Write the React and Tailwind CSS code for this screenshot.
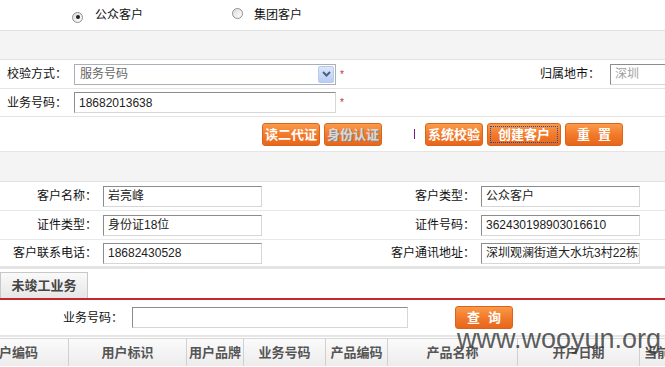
import React from 'react';

const font = { fontFamily: '"Liberation Sans", "Noto Sans CJK SC", sans-serif' };

function Radio({ checked }) {
  return (
    <span className="inline-flex h-[11px] w-[11px] items-center justify-center rounded-full border border-[#8f8f8f] bg-gradient-to-br from-[#dcdcdc] to-white">
      {checked && <span className="h-[4px] w-[4px] rounded-full bg-[#222]" />}
    </span>
  );
}

function Btn({ children, w = 'w-[58px]', disabled, focus, wide }) {
  return (
    <button
      className={`${w} h-[23px] rounded-[3px] border border-[#d9651c] bg-gradient-to-b from-[#fa9a4a] via-[#f27a2a] to-[#e8661b] p-[2px] text-[13px] font-bold leading-none`}
    >
      <span
        className={`flex h-full w-full items-center justify-center ${focus ? 'border border-dotted border-[#1f4fa8]' : ''} ${disabled ? 'text-[#d8d8d8] [text-shadow:1px_1px_0_#8a8a8a]' : 'text-white'} ${wide ? 'tracking-[8px] pl-[8px]' : ''}`}
      >
        {children}
      </span>
    </button>
  );
}

function Field({ value, w = 'w-[159px]', gray }) {
  return (
    <div
      className={`${w} flex h-[21px] items-center overflow-hidden whitespace-nowrap border border-b-[#d6d6d6] border-l-[#8c8c8c] border-r-[#d6d6d6] border-t-[#8c8c8c] bg-white px-[4px] text-[12px] ${gray ? 'text-[#a0a0a0]' : 'text-[#222]'}`}
    >
      {value}
    </div>
  );
}

function CustRow({ l1, v1, l2, v2, last }) {
  return (
    <div className={`flex h-[29px] items-center ${last ? 'border-b-[3px] border-[#e4e4e4]' : 'border-b border-[#e8e8e8]'}`}>
      <div className="w-[97px] text-right text-[12px] text-[#111]">{l1}</div>
      <div className="ml-[6px]"><Field value={v1} /></div>
      <div className="w-[213px] text-right text-[12px] text-[#111]">{l2}</div>
      <div className="ml-[6px]"><Field value={v2} /></div>
    </div>
  );
}

const cols = [
  ['用户编码', 'w-[113px] -ml-[44px]'],
  ['用户标识', 'w-[118px]'],
  ['用户品牌', 'w-[57px]'],
  ['业务号码', 'w-[82px]'],
  ['产品编码', 'w-[62px]'],
  ['产品名称', 'w-[130px]'],
  ['开户日期', 'w-[122px]'],
  ['当前状态', 'w-[80px] justify-start pl-[4px]'],
];

export default function App() {
  return (
    <div className="relative h-[367px] w-[665px] overflow-hidden bg-white text-[12px]" style={font}>
      {/* customer type radios */}
      <div className="flex h-[30px] items-center">
        <span className="ml-[72px]"><Radio checked /></span>
        <span className="ml-[12px] text-[#111]">公众客户</span>
        <span className="ml-[89px]"><Radio /></span>
        <span className="ml-[11px] text-[#111]">集团客户</span>
      </div>
      <div className="h-[30px] border-y border-[#e2e2e2] bg-[#f4f4f4]" />

      {/* verify */}
      <div className="flex h-[29px] items-center border-b border-[#e4e4e4]">
        <div className="ml-[7px] w-[67px] text-[#111]">校验方式：</div>
        <div className="flex h-[21px] w-[262px] items-center border border-[#a9b0b8] bg-white pl-[5px] pr-[1px]">
          <span className="flex-1 text-[12px] text-[#666]">服务号码</span>
          <span className="flex h-[17px] w-[16px] items-center justify-center rounded-[2px] border border-[#b9c9ef] bg-gradient-to-b from-[#dbe6fb] to-[#b9cdf5]">
            <svg width="9" height="6" viewBox="0 0 9 6"><path d="M1 1l3.5 3.5L8 1" stroke="#4d6185" strokeWidth="2" fill="none" /></svg>
          </span>
        </div>
        <span className="ml-[4px] text-[10px] text-[#d0283c]">*</span>
        <div className="ml-auto w-[70px] text-[#111]">归属地市：</div>
        <div className="-mr-[10px]"><Field value="深圳" w="w-[65px]" gray /></div>
      </div>
      <div className="flex h-[28px] items-center border-b border-[#e4e4e4]">
        <div className="ml-[7px] w-[67px] text-[#111]">业务号码：</div>
        <Field value="18682013638" w="w-[262px]" />
        <span className="ml-[4px] text-[10px] text-[#d0283c]">*</span>
      </div>

      {/* action buttons */}
      <div className="flex h-[35px] items-center border-b border-[#e4e4e4]">
        <div className="ml-[262px] flex gap-[4px]">
          <Btn>读二代证</Btn>
          <Btn disabled>身份认证</Btn>
        </div>
        <span className="ml-[32px] h-[10px] w-[1px] bg-[#7a1a8a]" />
        <div className="ml-[10px] flex gap-[4px]">
          <Btn>系统校验</Btn>
          <Btn w="w-[74px]" focus>创建客户</Btn>
          <Btn wide>重置</Btn>
        </div>
      </div>
      <div className="h-[30px] border-b border-[#e2e2e2] bg-[#f4f4f4]" />

      {/* customer info */}
      <CustRow l1="客户名称：" v1="岩亮峰" l2="客户类型：" v2="公众客户" />
      <CustRow l1="证件类型：" v1="身份证18位" l2="证件号码：" v2="362430198903016610" />
      <CustRow l1="客户联系电话：" v1="18682430528" l2="客户通讯地址：" v2="深圳观澜街道大水坑3村22栋3号" last />

      {/* tabs */}
      <div className="flex h-[31px] items-end border-b-2 border-[#c3262c]">
        <div className="flex h-[26px] w-[88px] items-center justify-center border border-b-0 border-[#c8c8c8] bg-gradient-to-b from-[#fafafa] to-[#e6e6e6] text-[13px] font-bold text-[#444]">
          未竣工业务
        </div>
      </div>

      {/* query */}
      <div className="flex h-[37px] items-center border-b-2 border-[#e6e6e6]">
        <div className="ml-[63px] w-[69px] text-[#111]">业务号码：</div>
        <Field value="" w="w-[276px]" />
        <div className="ml-[47px]"><Btn wide>查询</Btn></div>
      </div>

      {/* table header */}
      <div className="mt-[1px] flex h-[28px] border-t border-[#d8d8d8] bg-gradient-to-b from-[#fbfbfb] to-[#ececec]">
        {cols.map(([t, c]) => (
          <div key={t} className={`${c} flex shrink-0 items-center justify-center whitespace-nowrap border-r border-[#d0d0d0] text-[13px] font-bold text-[#555]`}>
            {t}
          </div>
        ))}
      </div>

      <div className="pointer-events-none absolute left-[457px] top-[326px] text-[27px] leading-none text-[#333]/80" style={{ fontFamily: '"Liberation Sans", sans-serif' }}>
        www.wooyun.org
      </div>
    </div>
  );
}
